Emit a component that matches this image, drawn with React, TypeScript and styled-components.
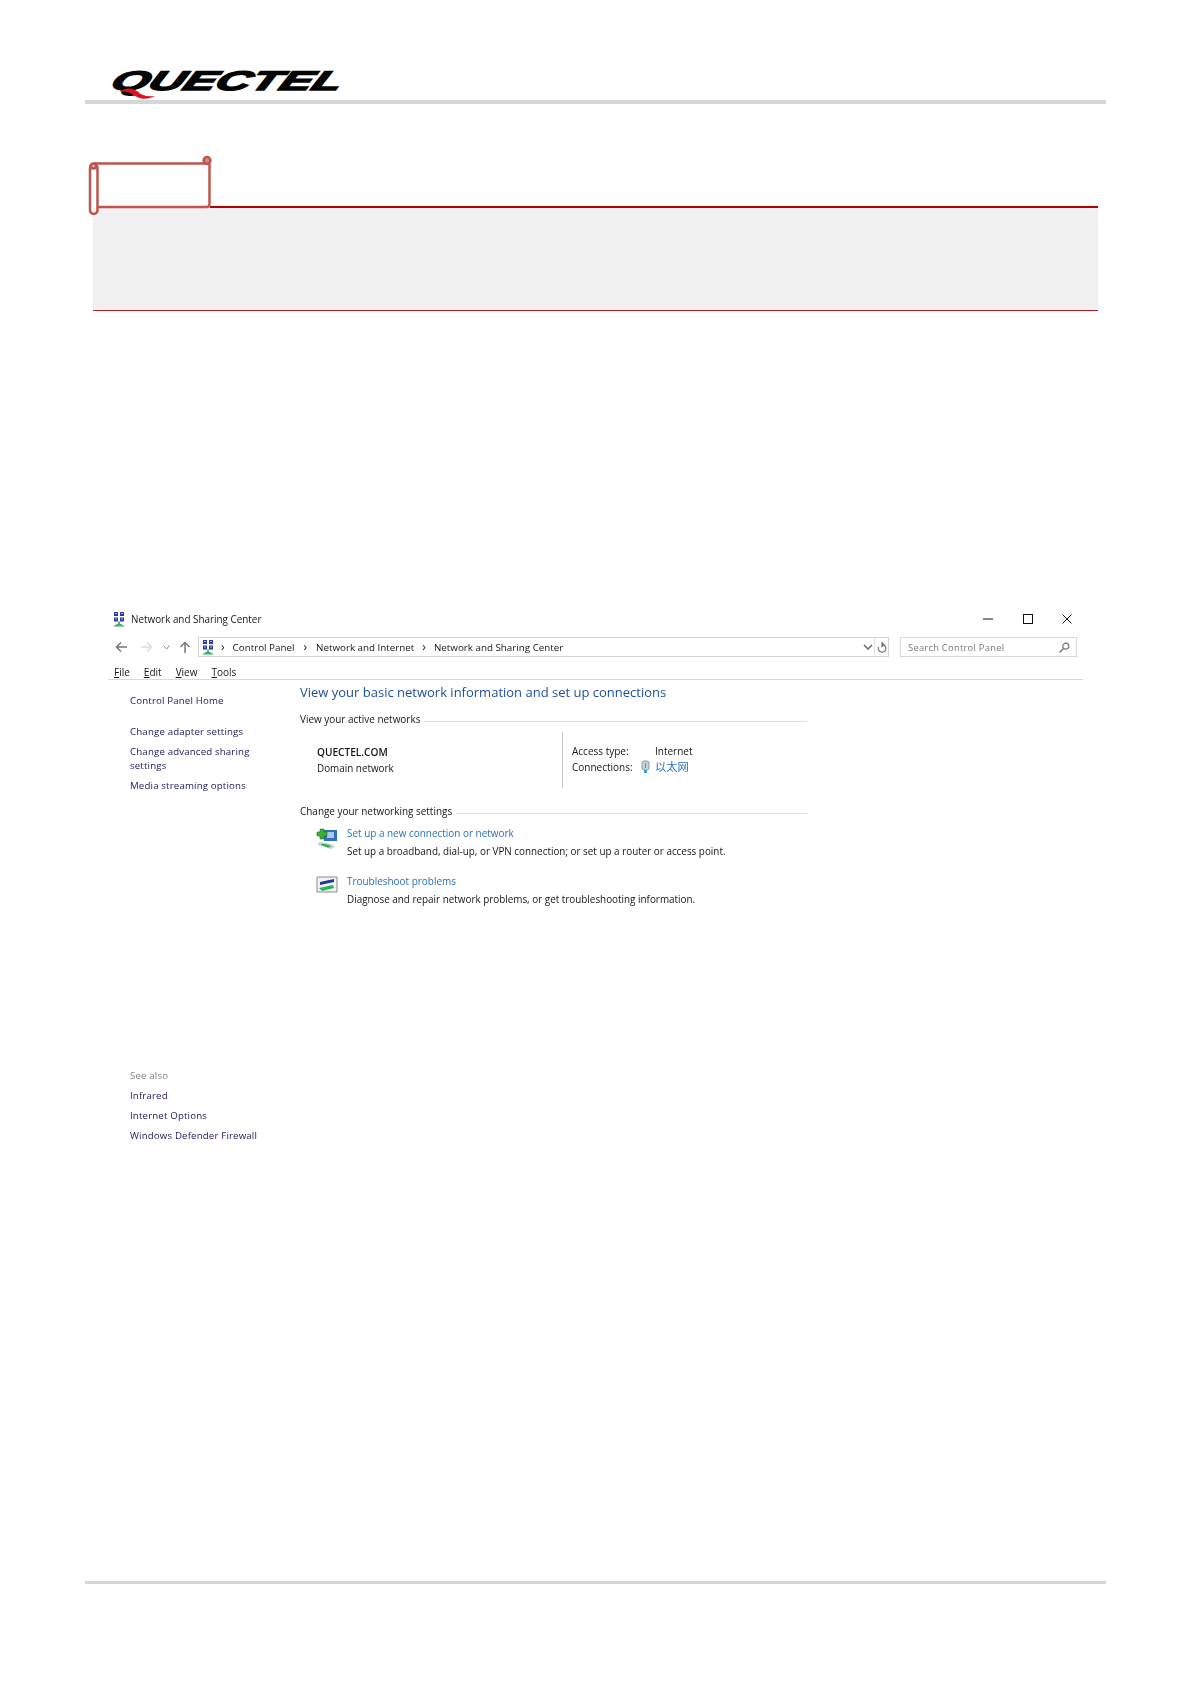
import React from "react";
import styled, { createGlobalStyle } from "styled-components";

const Global = createGlobalStyle`
  html, body { margin: 0; padding: 0; background: #fff; }
  * { box-sizing: border-box; }
`;

const Page = styled.div`
  width: 1191px; height: 1684px; padding: 0 85px 0 85px;
  display: flex; flex-direction: column;
  font-family: "Open Sans", "Noto Sans CJK SC", sans-serif; color: #151515;
`;
const Header = styled.header`
  height: 104px; border-bottom: 4px solid #d6d6d6; padding: 69px 0 0 33px; position: relative;
`;
const LogoText = styled.div`
  font: italic 900 27px/24px "Liberation Sans", sans-serif; color: #050505;
  -webkit-text-stroke: 1.4px #050505;
  transform-origin: left top; transform: scaleX(1.785) skewX(-14deg);
  white-space: nowrap; width: 130px;
`;
const Swoosh = styled.svg`
  position: absolute; left: 35px; top: 87px;
`;
const Note = styled.section`
  margin: 52px 8px 0 8px;
`;
const NoteHead = styled.div`
  height: 52px; position: relative; display: flex; align-items: flex-end; padding-left: 117px;
`;
const NoteRule = styled.div`
  flex: 1; height: 2px; background: #b00000;
`;
const Scroll = styled.svg`
  position: absolute; left: -5px; top: -1px;
`;
const NoteBody = styled.div`
  height: 103px; background: #f0f0f0; border-bottom: 1px solid #b02020;
`;
const Win = styled.section`
  margin: 298px 0 0 23px; width: 975px; font-size: 10px; filter: blur(0.3px);
`;
const TitleBar = styled.div`
  height: 20px; display: flex; align-items: center; gap: 5px; padding-left: 4px;
  line-height: 20px;
`;
const TitleText = styled.span`
  flex: 1; font-size: 9.9px;
`;
const WinButtons = styled.div`
  display: flex; align-items: center; gap: 29.5px; padding-right: 11px;
`;
const AddressRow = styled.div`
  height: 20px; margin-top: 8px; display: flex; align-items: center; padding-left: 7px;
`;
const NavButtons = styled.div`
  width: 83px; display: flex; align-items: center;
`;
const NavIcon = styled.svg<{ $left?: number }>`
  margin-left: ${(p) => p.$left ?? 0}px; flex: none;
`;
const AddressBox = styled.div`
  width: 691px; height: 20px; border: 1px solid #d4d4d4; display: flex; align-items: center;
  padding-left: 2px; font-size: 9.8px;
`;
const Crumb = styled.span<{ $left?: number; $right?: number }>`
  margin: 0 ${(p) => p.$right ?? 8}px 0 ${(p) => p.$left ?? 8}px;
  white-space: nowrap; font-size: 12px; line-height: 12px;
`;
const AddressEnd = styled.div`
  margin-left: auto; display: flex; align-items: center; height: 100%;
`;
const Refresh = styled.div`
  width: 14px; height: 100%; margin-left: 1px; border-left: 1px solid #e2e2e2; display: flex; align-items: center; justify-content: center;
`;
const SearchBox = styled.div`
  width: 177px; height: 20px; margin-left: 11px; border: 1px solid #d8d8d8; display: flex; align-items: center;
  justify-content: space-between; padding: 0 6px 0 7px; color: #7a7a7a; font-size: 9.4px; letter-spacing: 0.25px;
`;
const MenuBar = styled.nav`
  height: 23px; display: flex; align-items: center; gap: 14px; padding: 8px 0 0 6px;
  border-bottom: 1px solid #d9d9d9; font-size: 10px;
  u { text-decoration-thickness: 1px; text-underline-offset: 1px; }
`;
const Body = styled.div`
  display: flex;
`;
const Side = styled.aside`
  width: 192px; padding: 14px 0 0 22px; display: flex; flex-direction: column;
`;
const SideLink = styled.div<{ $top: number; $muted?: boolean }>`
  margin-top: ${(p) => p.$top}px; line-height: 13.5px; width: 135px; font-size: 9.7px; letter-spacing: 0.15px;
  color: ${(p) => (p.$muted ? "#808080" : "#20205f")};
`;
const Main = styled.main`
  width: 507px;
`;
const Heading = styled.h1`
  margin: 2px 0 0; font-weight: 400; font-size: 13px; line-height: 20px; color: #1f4e9a; white-space: nowrap;
`;
const SectionHead = styled.div<{ $top: number }>`
  margin-top: ${(p) => p.$top}px; height: 14px; line-height: 14px; display: flex; align-items: center; gap: 4px;
  white-space: nowrap; font-size: 9.95px;
  &::after { content: ""; flex: 1; height: 1px; background: #dedede; margin-top: 5px; }
`;
const Networks = styled.div`
  height: 56px; margin-top: 6px; display: flex; line-height: 16px; font-size: 9.9px;
`;
const NetName = styled.div`
  width: 262px; padding: 12px 0 0 17px;
  b { display: block; font-weight: 600; font-size: 10.1px; }
`;
const NetInfo = styled.div`
  flex: 1; border-left: 1px solid #c8c8c8; padding: 11px 0 0 9px;
`;
const InfoRow = styled.div`
  display: flex; align-items: center; height: 16px; font-size: 10px;
`;
const InfoLabel = styled.span`
  width: 83px; display: flex; justify-content: space-between; padding-right: 5px; align-items: center;
`;
const CnLink = styled.span`
  color: #2a72c4; font-size: 11.3px;
`;
const Task = styled.div<{ $top: number }>`
  margin-top: ${(p) => p.$top}px; display: flex; gap: 9px; padding-left: 16px; line-height: 16px;
`;
const TaskIcon = styled.div`
  width: 22px; height: 22px; flex: none; margin-top: 3px;
`;
const TaskText = styled.div`
  display: flex; flex-direction: column; gap: 2px; white-space: nowrap; font-size: 9.9px;
`;
const TaskLink = styled.span`
  color: #2a70b8; font-size: 9.95px;
`;
const FootRule = styled.footer`
  margin-top: auto; margin-bottom: 100px; height: 3px; background: #d6d6d6;
`;

const NetIcon = () => (
  <svg width="14" height="16" viewBox="0 0 14 16">
    <path d="M2 1h4v4H2zM8 1h4v4H8zM2 6.500h4v4H2zM8 6.500h4v4H8z" fill="#2b3aa0" />
    <path d="M3 2h2v1H3zM9 2h2v1H9zM3 7.500h2v1H3zM9 7.500h2v1H9z" fill="#9db4e8" />
    <path d="M6.200 10.500h1.600V13H6.200z" fill="#3a9a5a" />
    <path d="M1 15.500L6 12.500h2l5 3z" fill="#36b06a" />
  </svg>
);

export default function App() {
  return (
    <Page>
      <Global />
      <Header>
        <LogoText>QUECTEL</LogoText>
        <Swoosh width="40" height="14" viewBox="0 0 40 14">
          <path d="M0 5C6 0 13 1 18 5c5 4 9 5 17 4-6 3-12 4-18 1C12 7 7 3 0 5z" fill="#e01020" />
        </Swoosh>
      </Header>
      <Note>
        <NoteHead>
          <NoteRule />
          <Scroll width="128" height="62" viewBox="0 0 128 62">
            <g fill="none" stroke="#bd5650" strokeWidth="2.500">
              <path d="M6 8.500H119.500c2 0 2 0 2 2V49c0 2-1 3-3 3H9" />
              <rect x="2" y="9" width="7.500" height="50" rx="3.700" />
              <circle cx="119" cy="5.500" r="3.400" fill="#cf8a86" />
              <circle cx="5.500" cy="11" r="2.600" fill="#e8c0bd" />
            </g>
          </Scroll>
        </NoteHead>
        <NoteBody />
      </Note>
      <Win>
        <TitleBar>
          <NetIcon />
          <TitleText>Network and Sharing Center</TitleText>
          <WinButtons>
            <svg width="10" height="10" viewBox="0 0 10 10"><path d="M0 5h10" stroke="#111" /></svg>
            <svg width="10" height="10" viewBox="0 0 10 10"><rect x=".5" y=".5" width="9" height="9" fill="none" stroke="#111" /></svg>
            <svg width="10" height="10" viewBox="0 0 10 10"><path d="M.5.5l9 9M9.500.5l-9 9" stroke="#111" /></svg>
          </WinButtons>
        </TitleBar>
        <AddressRow>
          <NavButtons>
            <NavIcon width="12" height="12" viewBox="0 0 12 12"><path d="M12 6H1.500M6 1.500L1.500 6 6 10.500" fill="none" stroke="#777" strokeWidth="1.500" /></NavIcon>
            <NavIcon $left={14} width="12" height="12" viewBox="0 0 12 12"><path d="M0 6h10.500M6 1.500L10.500 6 6 10.500" fill="none" stroke="#ddd" strokeWidth="1.500" /></NavIcon>
            <NavIcon $left={10} width="7" height="5" viewBox="0 0 7 5"><path d="M.5.5L3.500 4 6.500.5" fill="none" stroke="#888" /></NavIcon>
            <NavIcon $left={9} width="12" height="12" viewBox="0 0 12 12"><path d="M6 12V1.500M1.500 6L6 1.500 10.500 6" fill="none" stroke="#777" strokeWidth="1.500" /></NavIcon>
          </NavButtons>
          <AddressBox>
            <NetIcon />
            <Crumb $left={6} $right={8}>›</Crumb>Control Panel
            <Crumb $left={9} $right={9}>›</Crumb>Network and Internet
            <Crumb>›</Crumb>Network and Sharing Center
            <AddressEnd>
              <svg width="10" height="6" viewBox="0 0 10 6"><path d="M1 1l4 4 4-4" fill="none" stroke="#666" strokeWidth="1.500" /></svg>
              <Refresh>
                <svg width="10" height="11" viewBox="0 0 10 11"><path d="M5 2.500a3.800 3.800 0 1 1-3.500 2.500M5 .5v4L7 2.500z" fill="none" stroke="#777" strokeWidth="1.200" /></svg>
              </Refresh>
            </AddressEnd>
          </AddressBox>
          <SearchBox>
            Search Control Panel
            <svg width="11" height="11" viewBox="0 0 11 11"><circle cx="6.800" cy="4.200" r="3" fill="none" stroke="#777" strokeWidth="1.200" /><path d="M4.500 6.500L.5 10.500" stroke="#777" strokeWidth="1.500" /></svg>
          </SearchBox>
        </AddressRow>
        <MenuBar>
          <span><u>F</u>ile</span><span><u>E</u>dit</span><span><u>V</u>iew</span><span><u>T</u>ools</span>
        </MenuBar>
        <Body>
          <Side>
            <SideLink $top={0}>Control Panel Home</SideLink>
            <SideLink $top={17}>Change adapter settings</SideLink>
            <SideLink $top={7}>Change advanced sharing settings</SideLink>
            <SideLink $top={7}>Media streaming options</SideLink>
            <SideLink $top={276} $muted>See also</SideLink>
            <SideLink $top={7}>Infrared</SideLink>
            <SideLink $top={6.5}>Internet Options</SideLink>
            <SideLink $top={6.5}>Windows Defender Firewall</SideLink>
          </Side>
          <Main>
            <Heading>View your basic network information and set up connections</Heading>
            <SectionHead $top={10}>View your active networks</SectionHead>
            <Networks>
              <NetName><b>QUECTEL.COM</b>Domain network</NetName>
              <NetInfo>
                <InfoRow><InfoLabel>Access type:</InfoLabel>Internet</InfoRow>
                <InfoRow>
                  <InfoLabel>Connections:
                    <svg width="9" height="14" viewBox="0 0 9 14"><rect x="1" y="1" width="7" height="9" rx="2" fill="#c4d4dc" stroke="#8a9aa4" /><path d="M4.500 3v5" stroke="#7a8a94" /><path d="M3 10h3v3H3z" fill="#3aa0d8" /></svg>
                  </InfoLabel>
                  <CnLink>以太网</CnLink>
                </InfoRow>
              </NetInfo>
            </Networks>
            <SectionHead $top={16}>Change your networking settings</SectionHead>
            <Task $top={7}>
              <TaskIcon>
                <svg width="22" height="22" viewBox="0 0 22 22">
                  <path d="M8 2h13v11H8z" fill="#2f6fc0" /><path d="M11 4h7v6h-7z" fill="#a8c8ee" />
                  <path d="M3 14l12 2 4 3-4 2-13-4z" fill="#c8ccd0" /><path d="M6 15.500l7 1.500 2 1.500-3 1-7-2.500z" fill="#2eae5a" />
                  <path d="M4 1h4v3h3v4H8v3H4V8H1V4h3z" fill="#3cb034" stroke="#1e7a1e" strokeWidth=".6" />
                </svg>
              </TaskIcon>
              <TaskText>
                <TaskLink>Set up a new connection or network</TaskLink>
                <span>Set up a broadband, dial-up, or VPN connection; or set up a router or access point.</span>
              </TaskText>
            </Task>
            <Task $top={14}>
              <TaskIcon>
                <svg width="22" height="20" viewBox="0 0 22 20">
                  <path d="M1 1h20v15H1z" fill="#f2f4f4" stroke="#8a8a8a" />
                  <path d="M4 6l14-3v3L4 9z" fill="#23359a" />
                  <path d="M3 12l14-3 1 3-12 3z" fill="#2eb060" />
                </svg>
              </TaskIcon>
              <TaskText>
                <TaskLink>Troubleshoot problems</TaskLink>
                <span>Diagnose and repair network problems, or get troubleshooting information.</span>
              </TaskText>
            </Task>
          </Main>
        </Body>
      </Win>
      <FootRule />
    </Page>
  );
}
